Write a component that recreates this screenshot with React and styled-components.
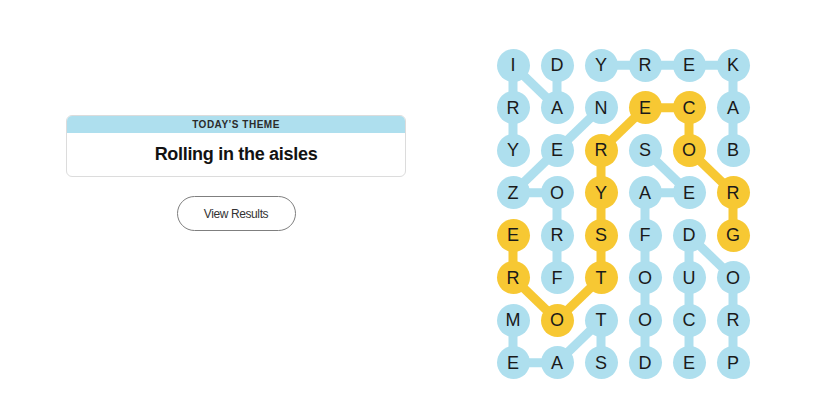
import React from "react";
import styled, { createGlobalStyle } from "styled-components";

const GlobalStyle = createGlobalStyle`
  html, body { margin: 0; padding: 0; background: #ffffff; }
  body { font-family: "Liberation Sans", Arial, sans-serif; color: #121212; }
`;

const BLUE = "#aedfee";
const YELLOW = "#f7c833";
const COL_W = 44;
const ROW_H = 42.5;

const LETTERS = [
  "IDYREK",
  "RANECA",
  "YERSOB",
  "ZOYAER",
  "ERSFDG",
  "RFTOUO",
  "MOTOCR",
  "EASDEP",
];

const FOUND = new Set([
  "1,3", "1,4", "2,4", "3,5", "4,5",
  "2,2", "3,2", "4,2", "5,2", "6,1", "5,0", "4,0",
]);

const BLUE_LINKS = [
  [[0, 0], [1, 0]], [[0, 0], [1, 1]], [[0, 1], [1, 1]],
  [[0, 2], [0, 3]], [[0, 3], [0, 4]], [[0, 4], [0, 5]], [[0, 5], [1, 5]], [[1, 5], [2, 5]],
  [[1, 0], [2, 0]],
  [[1, 2], [2, 1]], [[2, 1], [3, 0]], [[3, 0], [3, 1]], [[3, 1], [4, 1]], [[4, 1], [5, 1]],
  [[2, 3], [3, 4]], [[3, 4], [3, 3]], [[3, 3], [4, 3]], [[4, 3], [5, 3]], [[5, 3], [6, 3]], [[6, 3], [7, 3]],
  [[4, 4], [5, 4]], [[5, 4], [6, 4]], [[6, 4], [7, 4]], [[4, 4], [5, 5]], [[5, 5], [6, 5]], [[6, 5], [7, 5]],
  [[6, 0], [7, 0]], [[7, 0], [7, 1]], [[7, 1], [6, 2]], [[6, 2], [7, 2]],
];

const YELLOW_LINKS = [
  [[1, 3], [1, 4]], [[1, 4], [2, 4]], [[2, 4], [3, 5]], [[3, 5], [4, 5]],
  [[1, 3], [2, 2]], [[2, 2], [3, 2]], [[3, 2], [4, 2]], [[4, 2], [5, 2]],
  [[5, 2], [6, 1]], [[6, 1], [5, 0]], [[5, 0], [4, 0]],
];

const Page = styled.main`
  display: flex;
  align-items: flex-start;
  gap: 86px;
  padding-left: 67px;
  height: 413px;
  box-sizing: border-box;
`;

const LeftPanel = styled.section`
  margin-top: 115px;
  width: 338px;
  display: flex;
  flex-direction: column;
  align-items: center;
  gap: 19px;
`;

const ThemeCard = styled.div`
  width: 100%;
  border: 1px solid #dcdcdc;
  border-radius: 6px;
  overflow: hidden;
  background: #fff;
`;

const ThemeHeader = styled.div`
  height: 17px;
  background: ${BLUE};
  display: flex;
  align-items: center;
  justify-content: center;
  font-size: 10px;
  font-weight: 700;
  letter-spacing: 0.5px;
  color: #2b2b2b;
`;

const ThemeTitle = styled.div`
  height: 43px;
  display: flex;
  align-items: center;
  justify-content: center;
  font-size: 18px;
  font-weight: 700;
  letter-spacing: -0.3px;
  color: #121212;
`;

const ResultsButton = styled.button`
  width: 119px;
  height: 35px;
  border: 1px solid #7f7f7f;
  border-radius: 18px;
  background: #fff;
  font-family: "Liberation Sans", Arial, sans-serif;
  font-size: 12px;
  letter-spacing: -0.4px;
  color: #333;
  padding: 0;
`;

const Board = styled.div`
  position: relative;
  margin-top: 44px;
  display: grid;
  grid-template-columns: repeat(6, ${COL_W}px);
  grid-template-rows: repeat(8, ${ROW_H}px);
`;

const Links = styled.svg`
  position: absolute;
  inset: 0;
  z-index: 0;
  overflow: visible;
`;

const Letter = styled.div`
  position: relative;
  z-index: 1;
  place-self: center;
  width: 33px;
  height: 33px;
  border-radius: 50%;
  background: ${(p) => (p.$found ? YELLOW : BLUE)};
  display: flex;
  align-items: center;
  justify-content: center;
  font-size: 18px;
  color: #1a1a1a;
  line-height: 1;
`;

const cx = (c) => COL_W / 2 + COL_W * c;
const cy = (r) => ROW_H / 2 + ROW_H * r;

function LinkLines({ links, color }) {
  return links.map(([[r1, c1], [r2, c2]], i) => (
    <line
      key={i}
      x1={cx(c1)}
      y1={cy(r1)}
      x2={cx(c2)}
      y2={cy(r2)}
      stroke={color}
      strokeWidth="9"
    />
  ));
}

export default function App() {
  return (
    <>
      <GlobalStyle />
      <Page>
        <LeftPanel>
          <ThemeCard>
            <ThemeHeader>TODAY’S THEME</ThemeHeader>
            <ThemeTitle>Rolling in the aisles</ThemeTitle>
          </ThemeCard>
          <ResultsButton>View Results</ResultsButton>
        </LeftPanel>
        <Board>
          <Links width={COL_W * 6} height={ROW_H * 8}>
            <LinkLines links={BLUE_LINKS} color={BLUE} />
            <LinkLines links={YELLOW_LINKS} color={YELLOW} />
          </Links>
          {LETTERS.map((row, r) =>
            row.split("").map((ch, c) => (
              <Letter key={`${r}-${c}`} $found={FOUND.has(`${r},${c}`)}>
                {ch}
              </Letter>
            ))
          )}
        </Board>
      </Page>
    </>
  );
}
